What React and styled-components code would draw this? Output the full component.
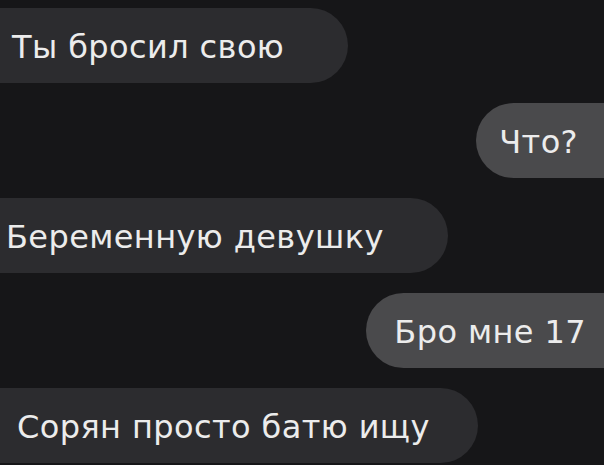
import React from "react";
import styled, { createGlobalStyle } from "styled-components";

const Global = createGlobalStyle`
  html, body { margin: 0; padding: 0; background: #161618; }
  body { width: 604px; height: 465px; overflow: hidden; }
`;

const Chat = styled.div`
  display: flex;
  flex-direction: column;
  gap: 20px;
  padding-top: 8px;
  width: 604px;
  height: 465px;
  box-sizing: border-box;
  overflow: hidden;
  font-family: "DejaVu Sans", "Liberation Sans", sans-serif;
`;

const Row = styled.div`
  display: flex;
  justify-content: ${(p) => (p.$out ? "flex-end" : "flex-start")};
`;

const Bubble = styled.div`
  height: 75px;
  box-sizing: border-box;
  display: flex;
  align-items: center;
  border-radius: 38px;
  background: ${(p) => (p.$out ? "#4a4a4c" : "#2c2c2f")};
  color: #ececec;
  font-size: 32px;
  line-height: 1;
  letter-spacing: 0.4px;
  white-space: nowrap;
  padding-top: 2px;
  padding-left: ${(p) => p.$pl}px;
  padding-right: ${(p) => p.$pr}px;
  margin-left: ${(p) => p.$ml || 0}px;
  margin-right: ${(p) => p.$mr || 0}px;
`;

const messages = [
  { text: "Ты бросил свою", out: false, ml: -40, pl: 52, pr: 64 },
  { text: "Что?", out: true, mr: -40, pl: 23, pr: 66 },
  { text: "Беременную девушку", out: false, ml: -40, pl: 46, pr: 64 },
  { text: "Бро мне 17", out: true, mr: -40, pl: 28, pr: 58 },
  { text: "Сорян просто батю ищу", out: false, ml: -40, pl: 57, pr: 48 },
];

export default function App() {
  return (
    <>
      <Global />
      <Chat>
        {messages.map((m, i) => (
          <Row key={i} $out={m.out}>
            <Bubble $out={m.out} $pl={m.pl} $pr={m.pr} $ml={m.ml} $mr={m.mr}>
              {m.text}
            </Bubble>
          </Row>
        ))}
      </Chat>
    </>
  );
}
